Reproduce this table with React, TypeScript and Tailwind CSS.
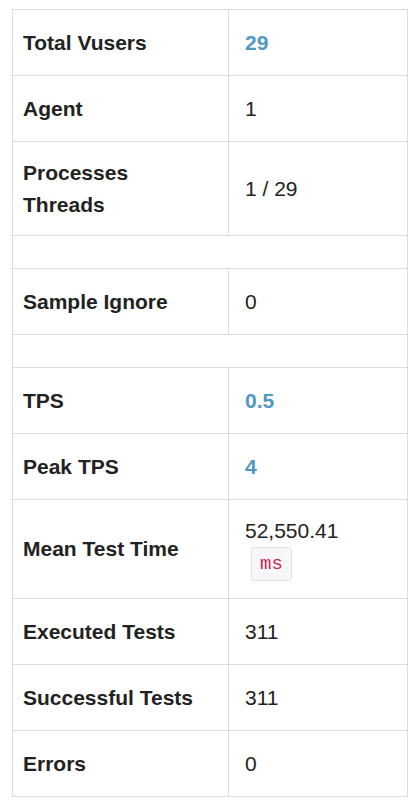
type Row =
  | { kind: "gap"; h: string }
  | { kind: "row"; label: string[]; value: React.ReactNode; h: string; blue?: boolean };

const rows: Row[] = [
  { kind: "row", label: ["Total Vusers"], value: "29", h: "h-[65px]", blue: true },
  { kind: "row", label: ["Agent"], value: "1", h: "h-[65px]" },
  { kind: "row", label: ["Processes", "Threads"], value: "1 / 29", h: "h-[93px]" },
  { kind: "gap", h: "h-[33px]" },
  { kind: "row", label: ["Sample Ignore"], value: "0", h: "h-[65px]" },
  { kind: "gap", h: "h-[33px]" },
  { kind: "row", label: ["TPS"], value: "0.5", h: "h-[65px]", blue: true },
  { kind: "row", label: ["Peak TPS"], value: "4", h: "h-[65px]", blue: true },
  {
    kind: "row",
    label: ["Mean Test Time"],
    h: "h-[98px]",
    value: (
      <div className="flex flex-col items-start">
        <span className="leading-[28px]">52,550.41</span>
        <code className="mt-[2px] ml-[6px] inline-block h-[34px] rounded-[3px] border border-[#e1e1e8] bg-[#f7f7f9] px-[8px] font-['Liberation_Mono',monospace] text-[19px] leading-[32px] text-[#c7254e]">
          ms
        </code>
      </div>
    ),
  },
  { kind: "row", label: ["Executed Tests"], value: "311", h: "h-[65px]" },
  { kind: "row", label: ["Successful Tests"], value: "311", h: "h-[65px]" },
  { kind: "row", label: ["Errors"], value: "0", h: "h-[65px]" },
];

export default function App() {
  return (
    <div className="min-h-[810px] w-[415px] bg-white pt-[9px] font-['Liberation_Sans',Arial,sans-serif] text-[21px] text-[#222]">
      <div className="ml-[12px] w-[396px] border border-[#dcdcdc]">
        {rows.map((r, i) =>
          r.kind === "gap" ? (
            <div key={i} className={`${r.h} border-t border-[#dcdcdc]`} />
          ) : (
            <div
              key={i}
              className={`grid grid-cols-[215px_1fr] ${i > 0 ? "border-t border-[#dcdcdc]" : ""}`}
            >
              <div className={`${r.h} flex flex-col justify-center pl-[10px] font-bold leading-[32px]`}>
                {r.label.map((l) => (
                  <span key={l}>{l}</span>
                ))}
              </div>
              <div
                className={`flex items-center border-l border-[#dcdcdc] pl-[16px] ${
                  r.blue ? "font-bold text-[#4f98c6]" : ""
                }`}
              >
                {r.value}
              </div>
            </div>
          )
        )}
      </div>
    </div>
  );
}
